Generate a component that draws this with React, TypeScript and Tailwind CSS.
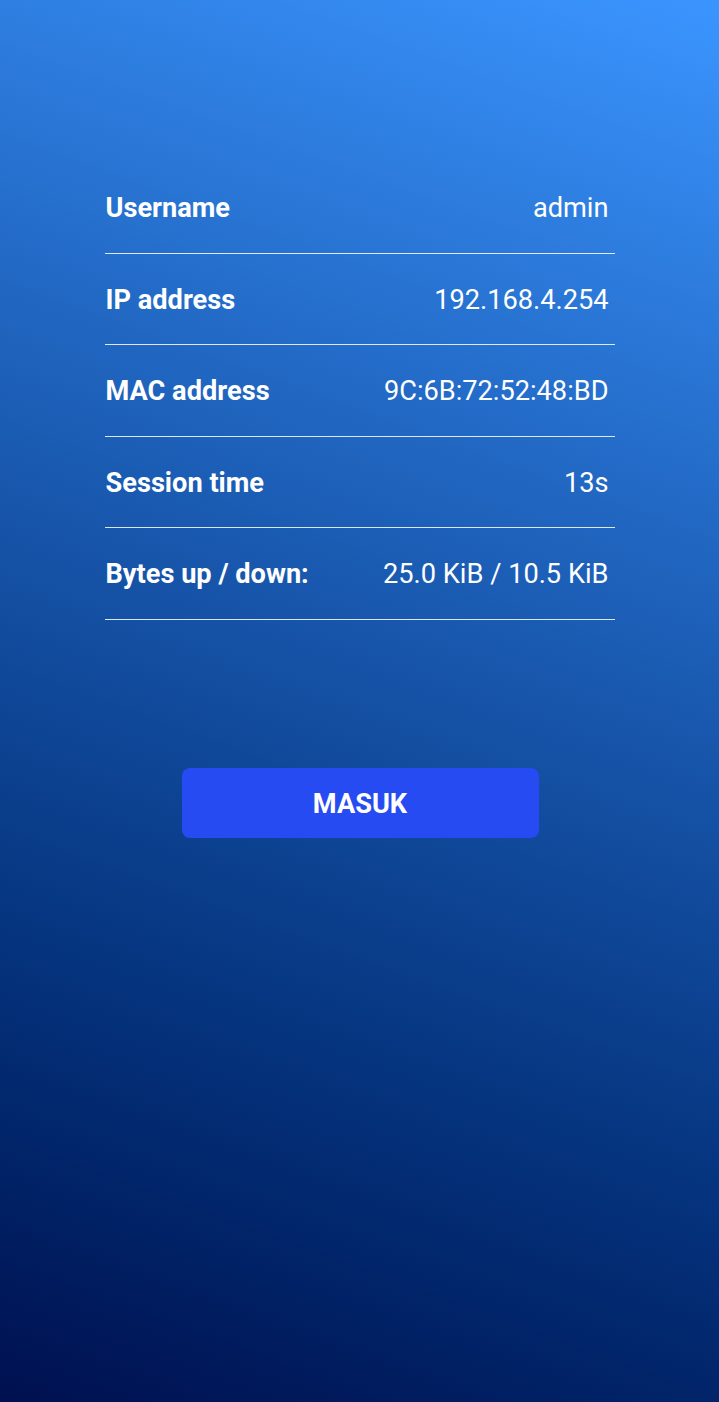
import React from 'react';

const rows: { label: string; value: string }[] = [
  { label: 'Username', value: 'admin' },
  { label: 'IP address', value: '192.168.4.254' },
  { label: 'MAC address', value: '9C:6B:72:52:48:BD' },
  { label: 'Session time', value: '13s' },
  { label: 'Bytes up / down:', value: '25.0 KiB / 10.5 KiB' },
];

const App: React.FC = () => {
  return (
    <div className="min-h-[1402px] w-full bg-linear-20 from-[#001050] to-[#3b95ff] font-['Roboto','Liberation_Sans',sans-serif] text-white">
      <div className="pt-[162px]">
        <div className="mx-auto w-[510px]">
          {rows.map((row) => (
            <div
              key={row.label}
              className="flex items-center justify-between border-b border-white/85 pl-[1px] pr-[6px] pt-[2px] h-[91.5px] text-[27.2px] leading-[32px]"
            >
              <span className="font-bold">{row.label}</span>
              <span>{row.value}</span>
            </div>
          ))}
        </div>

        <div className="mt-[148px] flex justify-center">
          <button
            type="button"
            className="ml-[1px] h-[70px] w-[357px] rounded-lg bg-[#264bf2] pt-[3px] text-[27.2px] font-bold text-white"
          >
            MASUK
          </button>
        </div>
      </div>
    </div>
  );
};

export default App;
